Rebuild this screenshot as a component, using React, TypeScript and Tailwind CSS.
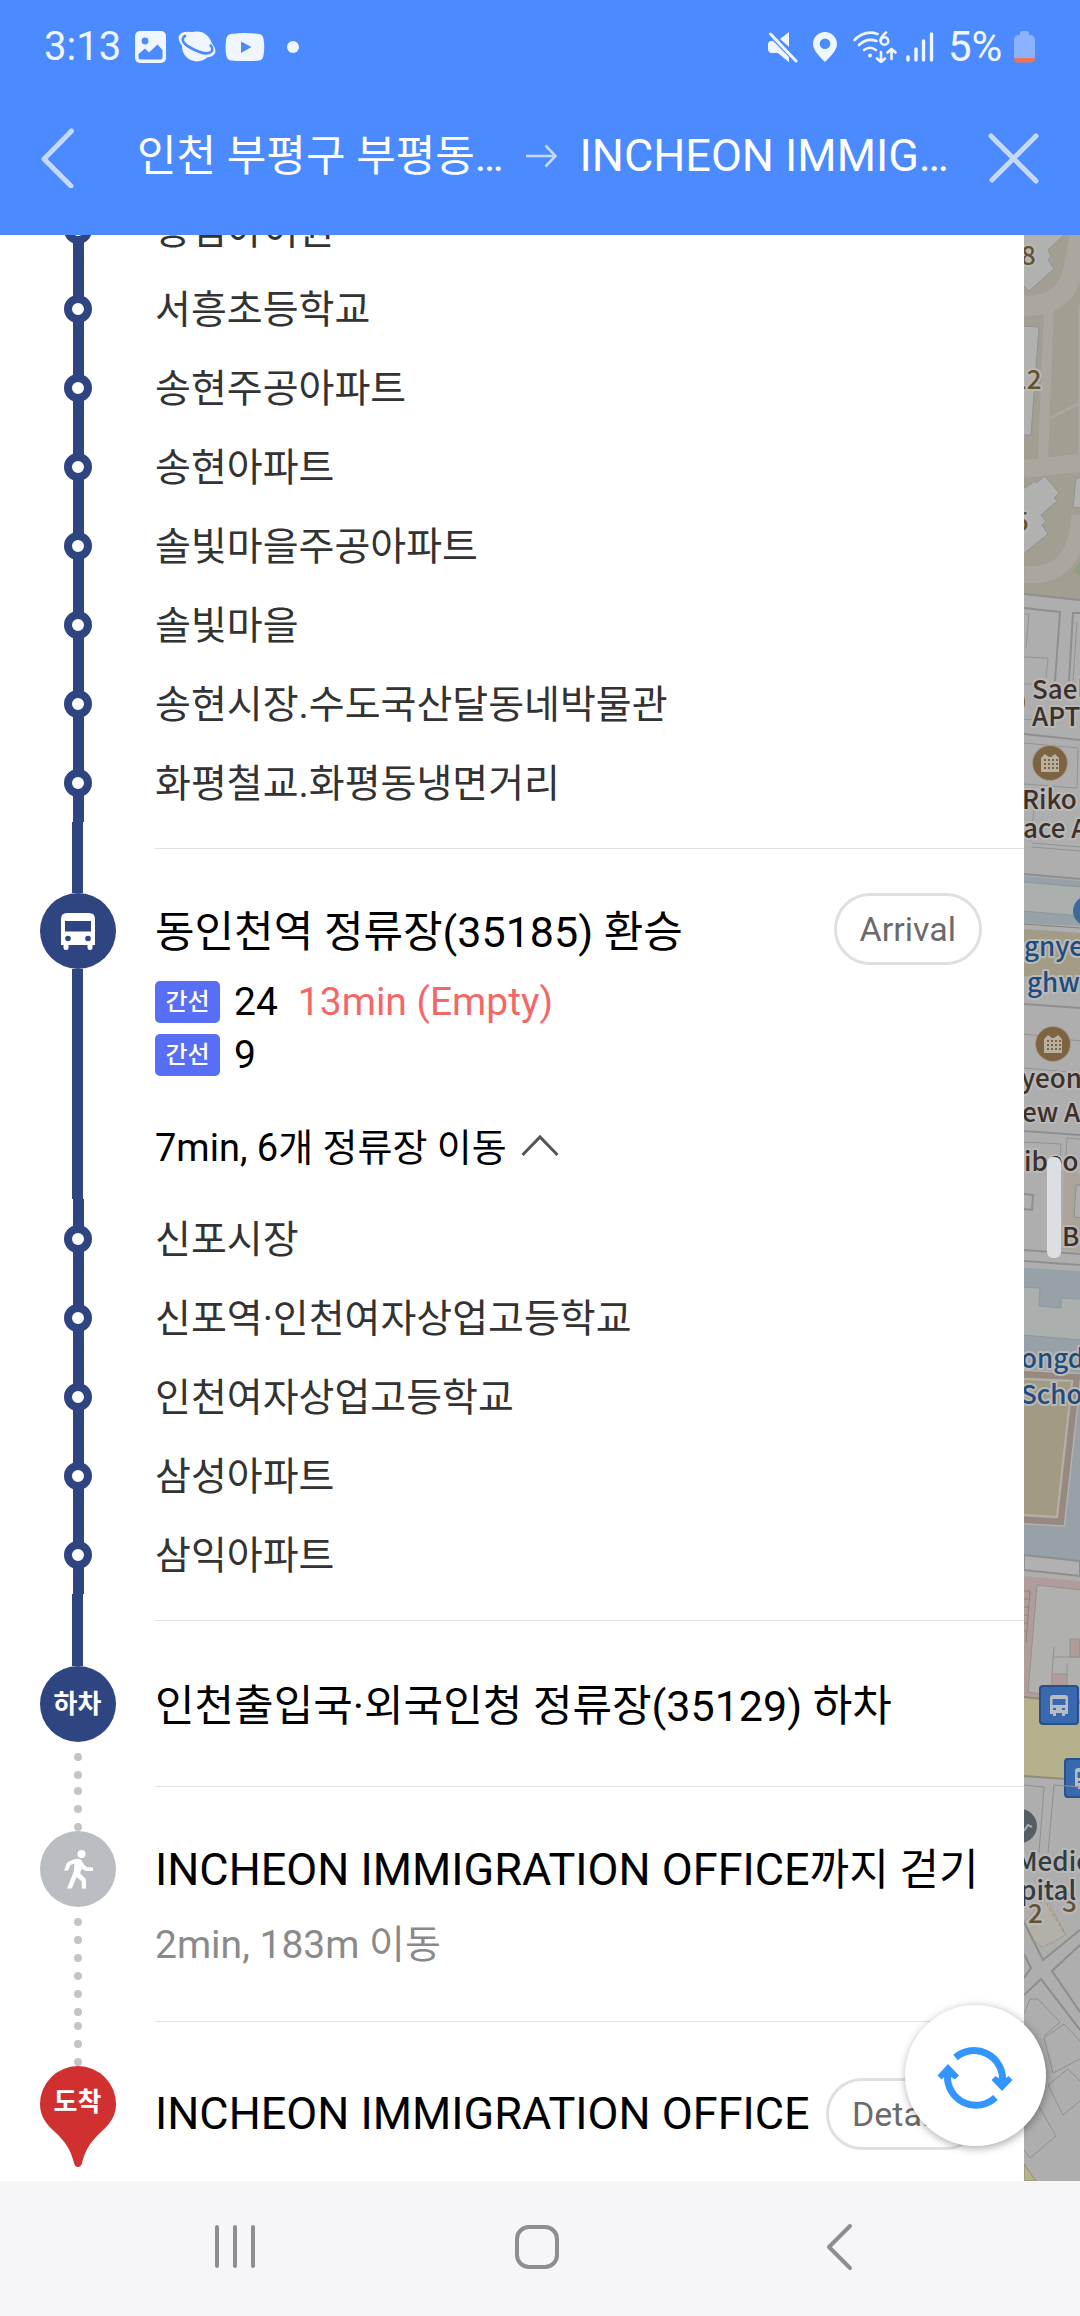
import React from "react";

const FONT = "font-['Roboto','Noto_Sans_CJK_KR',sans-serif]";

const FIRST_STOPS = [
  "송림아이원",
  "서흥초등학교",
  "송현주공아파트",
  "송현아파트",
  "솔빛마을주공아파트",
  "솔빛마을",
  "송현시장.수도국산달동네박물관",
  "화평철교.화평동냉면거리",
];

const SECOND_STOPS = [
  "신포시장",
  "신포역·인천여자상업고등학교",
  "인천여자상업고등학교",
  "삼성아파트",
  "삼익아파트",
];

/* ---------- status bar ---------- */

function StatusBar() {
  return (
    <div className="flex h-[94px] items-center justify-between pl-11 pr-11 text-[#f0f6ff]">
      <div className="flex items-center">
        <span className="w-[91px] text-[40px] leading-[44px]">3:13</span>
        <svg className="h-8 w-8" viewBox="0 0 32 32" aria-hidden="true">
          <rect x="0" y="0" width="31" height="32" rx="5" fill="#f0f6ff" />
          <circle cx="10" cy="10" r="3.4" fill="#4c8aff" />
          <path d="M3.5 23 L10 17.5 L14 21.5 L22.5 13.5 L27.5 19 V26.5 Q27.5 28.5 25.5 28.5 H5.5 Q3.5 28.5 3.5 26.5 Z" fill="#4c8aff" />
        </svg>
        <svg className="ml-[11px] h-8 w-10" viewBox="0 0 40 32" aria-hidden="true">
          <circle cx="19" cy="15.500" r="15" fill="#f0f6ff" />
          <ellipse cx="19" cy="13.500" rx="20" ry="10" transform="rotate(27 19 13.500)" fill="#f0f6ff" />
          <path d="M8 4.500 C2.500 7 4 12 12 16.500 C20 21 29 24 33 21 C35.500 19 34 16 32 13.500" fill="none" stroke="#4c8aff" strokeWidth="2.600" />
        </svg>
        <svg className="ml-[7px] h-7 w-10" viewBox="0 0 40 28" aria-hidden="true">
          <path d="M6 1 Q20 -1 34 1 Q38 1.500 38.500 6 Q40 14 38.500 22 Q38 27 34 27.500 Q20 29 6 27.500 Q2 27 1.200 22 Q0 14 1.200 6 Q2 1.500 6 1Z" fill="#f0f6ff" />
          <path d="M16 8.500 L26.500 14 L16 20Z" fill="#4c8aff" />
        </svg>
        <span className="ml-[22px] size-3 rounded-full bg-[#f0f6ff]" />
      </div>
      <div className="flex items-center">
        <svg className="h-8 w-8" viewBox="0 0 32 32" aria-hidden="true">
          <path d="M2 11 Q3 10 6 10 L22 26 V31 L11 22 H5 Q1 22 1 16 Q1 12 2 11Z" fill="#f0f6ff" />
          <path d="M13 8 L22 1 V16Z" fill="#f0f6ff" />
          <path d="M3.500 3 L29 30" stroke="#4c8aff" strokeWidth="6" />
          <path d="M3.500 3 L29 30" stroke="#f0f6ff" strokeWidth="3" strokeLinecap="round" />
          <path d="M2 11 Q3 10 6 10 L22 26 V31 L11 22 H5 Q1 22 1 16 Q1 12 2 11Z" fill="#f0f6ff" />
        </svg>
        <svg className="ml-3.5 h-8 w-6" viewBox="0 0 24 32" aria-hidden="true">
          <path fillRule="evenodd" d="M12 1 C18.600 1 24 6 24 13 C24 19.500 17 26 12 31 C7 26 0 19.500 0 13 C0 6 5.400 1 12 1Z M12 7.500 A5.300 5.300 0 1 0 12 18.100 A5.300 5.300 0 1 0 12 7.500Z" fill="#f0f6ff" />
        </svg>
        <svg className="ml-4 h-8 w-11" viewBox="0 0 44 32" aria-hidden="true" fill="none" stroke="#f0f6ff" strokeWidth="2.600" strokeLinecap="round" strokeLinejoin="round">
          <path d="M1.500 9 Q12 -1.500 24.500 3" />
          <path d="M6 14 Q14 6.500 23.500 10" />
          <path d="M11 19 Q17 14.500 23 19" />
          <circle cx="17" cy="24.500" r="1.200" fill="#f0f6ff" strokeWidth="1.500" />
          <path d="M33 1.500 Q28.500 5 27.500 9" />
          <circle cx="31.500" cy="10" r="3.800" />
          <path d="M28 21 V31 M24 27.500 L28 31 L32 27.500" />
          <path d="M38.500 28 V18 M34.500 21.500 L38.500 18 L42.500 21.500" />
        </svg>
        <svg className="ml-[9px] h-8 w-7" viewBox="0 0 28 32" aria-hidden="true" fill="none" stroke="#f0f6ff" strokeWidth="3.400" strokeLinecap="round">
          <path d="M2 26 V29 M10 18 V29 M17.500 10 V29 M25.500 3 V29" />
        </svg>
        <span className="ml-3.5 w-[66px] text-[42px] leading-[44px]">5%</span>
        <svg className="h-8 w-[22px]" viewBox="0 0 22 32" aria-hidden="true">
          <path d="M6 2 Q6 0 8 0 H13 Q15 0 15 2 V4 H17 Q21 5 21 9 V28 H0 V9 Q0 5 4 4 H6Z" fill="#8bb2ff" />
          <path d="M0 27 H21 Q21 31.500 17 31.500 H4 Q0 31.500 0 27Z" fill="#ee7459" />
        </svg>
      </div>
    </div>
  );
}

function RouteHeader() {
  return (
    <div className="flex h-[141px] items-start pl-10 pr-10 pt-[34px] leading-[56px] text-white">
      <button type="button" aria-label="Back" className="h-[60px] w-[97px] shrink-0">
        <svg className="h-[60px] w-9" viewBox="0 0 36 60" fill="none" stroke="#c5d9ff" strokeWidth="5" strokeLinecap="round" strokeLinejoin="round">
          <path d="M31.500 3 L4 31 L31 58" />
        </svg>
      </button>
      <span className="whitespace-nowrap text-[43px]">인천 부평구 부평동…</span>
      <svg className="ml-[22px] mt-3 h-8 w-8 shrink-0" viewBox="0 0 32 32" fill="none" stroke="#c5d9ff" strokeWidth="2.600" aria-hidden="true">
        <path d="M0 16 H29 M19.500 5.500 L29.500 16 L19.500 26.500" />
      </svg>
      <span className="ml-[22px] whitespace-nowrap text-[45px]">INCHEON IMMIG…</span>
      <button type="button" aria-label="Close" className="ml-auto mt-1 size-[54px] shrink-0">
        <svg className="size-[54px]" viewBox="0 0 54 54" fill="none" stroke="#c5d9ff" strokeWidth="5" strokeLinecap="round">
          <path d="M5 4 L50 49 M50 4 L6 48" />
        </svg>
      </button>
    </div>
  );
}

/* ---------- timeline ---------- */

function Stop({ name }: { name: string }) {
  return (
    <li className="flex h-[79px]">
      <div className="flex w-[155px] shrink-0 flex-col items-center pl-px">
        <span className="w-[11px] flex-1 bg-[#2f4582]" />
        <span className="z-10 -my-1 size-7 rounded-full border-8 border-[#2f4582] bg-white" />
        <span className="w-[11px] flex-1 bg-[#2f4582]" />
      </div>
      <span className="whitespace-nowrap text-[39px] leading-[82px] text-[#333333]">{name}</span>
    </li>
  );
}

function Dots({ count, first }: { count: number; first?: boolean }) {
  return (
    <span className={first ? "flex flex-col gap-2.5 pt-px" : "flex flex-col gap-2.5 pt-[11px]"}>
      {Array.from({ length: count }, (_, i) => (
        <span key={i} className="size-2 rounded-full bg-[#c4c4c6]" />
      ))}
    </span>
  );
}

function Rail({ children }: { children: React.ReactNode }) {
  return <div className="flex w-[155px] shrink-0 flex-col items-center">{children}</div>;
}

function Bus({ wheel }: { wheel: string }) {
  return (
    <>
      <path d="M0 6 Q0 0 6 0 H28 Q34 0 34 6 V32 H31.500 V34.500 Q31.500 37 29 37 Q26.500 37 26.500 34.500 V32 H7.500 V34.500 Q7.500 37 5 37 Q2.500 37 2.500 34.500 V32 H0Z" fill="#fff" />
      <rect x="4" y="8" width="26" height="10.500" fill={wheel} />
      <circle cx="7" cy="25.500" r="2.800" fill={wheel} />
      <circle cx="27" cy="25.500" r="2.800" fill={wheel} />
    </>
  );
}

function Route({ number, children }: { number: string; children?: React.ReactNode }) {
  return (
    <li className="flex h-[42px] items-center text-[39px] leading-[42px]">
      <span className="mr-3.5 flex h-[42px] w-[65px] items-center justify-center rounded-[5px] bg-[#586ef5] text-2xl font-medium text-white">간선</span>
      <span>{number}</span>
      {children}
    </li>
  );
}

function Pill({ label }: { label: string }) {
  return (
    <button type="button" className="h-[72px] shrink-0 rounded-full border-[3px] border-[#e0e0e0] bg-white px-[23px] text-[34px] leading-[66px] text-[#6b6b6b]">
      {label}
    </button>
  );
}

function Timeline() {
  return (
    <ol className="-mt-[45px] text-[43px] text-black">
      {FIRST_STOPS.map((s) => (
        <Stop key={s} name={s} />
      ))}

      <li className="flex h-[377px]">
        <Rail>
          <span className="h-[71px] w-[11px] bg-[#2f4582]" />
          <span className="flex size-[76px] items-center justify-center rounded-full bg-[#2f4582]">
            <svg className="h-[37px] w-[34px]" viewBox="0 0 34 37" aria-label="Bus">
              <Bus wheel="#2f4582" />
            </svg>
          </span>
          <span className="w-[11px] flex-1 bg-[#2f4582]" />
        </Rail>
        <div className="mt-[26px] flex-1 border-t border-[#e2e2e2] pt-11">
          <div className="flex items-start justify-between pr-[42px]">
            <h2 className="whitespace-nowrap leading-[78px]">동인천역 정류장(35185) 환승</h2>
            <Pill label="Arrival" />
          </div>
          <ul className="mt-2.5 flex flex-col gap-[11px]">
            <Route number="24">
              <span className="ml-5 text-[#f46767]">13min (Empty)</span>
            </Route>
            <Route number="9" />
          </ul>
          <button type="button" className="mt-[46px] flex items-center text-[38px] leading-[52px]">
            7min, 6개 정류장 이동
            <svg className="mb-1 ml-3.5 h-6 w-[38px]" viewBox="0 0 38 24" fill="none" stroke="#555" strokeWidth="3" aria-hidden="true">
              <path d="M1.500 21 L19 3 L36.500 21" />
            </svg>
          </button>
        </div>
      </li>

      {SECOND_STOPS.map((s) => (
        <Stop key={s} name={s} />
      ))}

      <li className="flex h-[192px]">
        <Rail>
          <span className="h-[72px] w-[11px] bg-[#2f4582]" />
          <span className="flex size-[76px] items-center justify-center rounded-full bg-[#2f4582] text-[26px] font-bold leading-8 text-white">하차</span>
          <Dots count={2} />
        </Rail>
        <div className="mt-[26px] flex-1 border-t border-[#e2e2e2] pt-[46px]">
          <h2 className="whitespace-nowrap leading-[78px]">인천출입국·외국인청 정류장(35129) 하차</h2>
        </div>
      </li>

      <li className="flex h-[235px]">
        <Rail>
          <Dots count={3} first />
          <span className="flex size-[76px] items-center justify-center rounded-full bg-[#babec3]">
            <svg className="h-10 w-8" viewBox="0 0 32 40" fill="#fff" aria-label="Walk">
              <circle cx="19.500" cy="5" r="4" />
              <path d="M12 10.500 Q14 9.500 17 10 Q19.500 10.200 20.500 13 Q22 17 25 18.200 L31 18.500 V22 H25 Q22 21.500 19.500 19.500 L18.200 24.500 L23 29 Q24 30 24 31.500 V39.500 H19.800 V32.500 L14.500 28 L10.500 38 Q10 39.500 8.500 39.500 H5 L11.800 22.500 L12.500 14.500 L8.500 16 L6 21.500 H2 L4.800 14.500 Q5.300 13.200 6.500 12.700Z" />
            </svg>
          </span>
          <Dots count={6} />
        </Rail>
        <div className="flex-1 border-t border-[#e2e2e2] pt-11">
          <h2 className="whitespace-nowrap leading-[78px]">
            <span className="text-[45px]">INCHEON IMMIGRATION OFFICE</span>까지 걷기
          </h2>
          <p className="mt-2.5 text-[39px] leading-[52px] text-[#8a8a8a]">2min, 183m 이동</p>
        </div>
      </li>

      <li className="flex h-40">
        <Rail>
          <Dots count={3} first />
          <span className="relative h-[102px] w-[76px] pt-5 text-center text-[26px] font-bold leading-8 text-white">
            <svg className="absolute inset-0 h-[102px] w-[76px]" viewBox="0 0 76 102" aria-hidden="true">
              <path d="M38 0 A38 38 0 0 1 76 38 C76 50 70 58 61 66 C50 76 45 85 42 97 Q41 101 38 101 Q35 101 34 97 C31 85 26 76 15 66 C6 58 0 50 0 38 A38 38 0 0 1 38 0Z" fill="#d03030" />
            </svg>
            <span className="relative">도착</span>
          </span>
        </Rail>
        <div className="flex flex-1 items-start justify-between border-t border-[#e2e2e2] pr-[42px] pt-14">
          <h2 className="whitespace-nowrap text-[45px] leading-[72px]">INCHEON IMMIGRATION OFFICE</h2>
          <Pill label="Details" />
        </div>
      </li>
    </ol>
  );
}

/* ---------- map ---------- */

function AptPin({ x, y }: { x: number; y: number }) {
  return (
    <g transform={`translate(${x} ${y})`}>
      <circle r="17.500" fill="#7c6341" stroke="#a89a85" />
      <path d="M-9 9 V-5 L-5 -9 L-1 -6 L1 -6 L5 -9 L9 -5 V9Z" fill="#b9b0a0" />
      <path d="M-6 -3 H8 M-6 1 H8 M-6 5 H8" stroke="#7c6341" strokeWidth="2" strokeDasharray="2 2" />
    </g>
  );
}

function BusPin({ x, y }: { x: number; y: number }) {
  return (
    <g transform={`translate(${x} ${y})`}>
      <rect x="1" y="1" width="38" height="38" rx="3" fill="#3869ae" stroke="#28508a" strokeWidth="2" />
      <path d="M11 13 Q11 10 14 10 H26 Q29 10 29 13 V29 H26 V31 H23 V28 H17 V31 H14 V29 H11Z" fill="#b7bcc4" />
      <path d="M13.500 14 H26.500 V20 H13.500Z M14 23 H17 V25 H14Z M23 23 H26 V25 H23Z" fill="#3869ae" />
    </g>
  );
}

function MapStrip() {
  return (
    <svg className="h-full w-full" viewBox="0 0 56 1946" preserveAspectRatio="xMinYMin slice" role="img" aria-label="Map">
      <rect width="56" height="1946" fill="#aeaeae" />
      <rect width="56" height="366" fill="#a39e92" />
      <g fill="none" stroke="#aba79e">
        <path d="M0 71 Q38 72 48 40 L56 0" strokeWidth="20" />
        <path d="M25 70 L19 225" strokeWidth="10" />
        <path d="M0 234 L56 228" strokeWidth="18" />
        <path d="M26 183 L56 168" strokeWidth="3" />
        <path d="M56 70 V232" strokeWidth="4" />
        <path d="M0 339 Q52 345 56 280" strokeWidth="17" />
      </g>
      <path d="M0 359 L56 365 V640 H0Z" fill="#aeaeae" />
      <path d="M49 335 L56 328 V341Z" fill="#8ba184" />
      <g fill="#b1b1b0" stroke="#909396">
        <path d="M-1 -1 H41 L24 15 L27 21 L24 25 L30 34 L5 56 L-1 50Z" />
        <path d="M-1 91 L15 92 L7 200 H-1Z" />
        <path d="M-1 254 L11 246 L12 248 L21 241 L35 258 L30 263 L33 266 L17 280 L22 286 L18 290 L24 299 L-1 319Z" />
        <path d="M52 243 H57 V273 L49 272Z" />
      </g>
      <g fill="none" stroke="#8f8f8f" strokeWidth="2">
        <path d="M0 359 L56 365 M0 373 L36 377 L31 446 M56 378 H49 L45 446 M0 499 L56 505 M0 639 L56 644 M0 769 L56 773 M0 896 L56 900 M0 1015 L56 1019 M0 1026 L56 1030" />
      </g>
      <g fill="none" stroke="#939393">
        <path d="M0 379 H5 L2 413 M0 422 L24 423 L22 442 M53 387 L49 446 M0 449 H14 M0 484 L10 485 M0 508 L54 513 L53 553 L0 549 M8 608 L56 612 M10 574 L6 606 M0 799 L56 806 M0 833 L56 838 M0 907 L37 909 L36 925 M42 921 L43 903 L56 904 M8 612 L56 616" />
      </g>

      <path d="M0 641 L56 646 V691 L0 688Z" fill="#96a1a8" />
      <path d="M-1 647 L57 652 V681 L-1 676Z" fill="#abafae" stroke="#90979b" />
      <path d="M0 689 L56 693" stroke="#8d8078" />
      <path d="M0 694 L56 698 V746 L0 741Z" fill="#a29c87" />
      <circle cx="64" cy="676" r="15" fill="#3b6a9b" />

      <path d="M40 925 L56 940 V1017 L38 1014Z" fill="#aba49a" />
      <path d="M-1 959 L9 960 L8 975 L-1 974Z" fill="#aeaeae" stroke="#8f8f8f" strokeWidth="2" />
      <path d="M52 950 H57 V983 L50 982Z" fill="#aeaeae" stroke="#8f8f8f" />

      <path d="M0 1033 L56 1036 V1326 L0 1320Z" fill="#96a1a8" />
      <path d="M-1 1052 L16 1053 L15 1071 L37 1073 V1063 L57 1064 V1105 L-1 1100Z" fill="#abafae" stroke="#90979b" />
      <path d="M-2 1139 L53 1142 L37 1287 L-2 1285Z" fill="#a29b84" stroke="#b5b0aa" strokeWidth="9" />
      <path d="M-2 1139 L53 1142 L37 1287 L-2 1285Z" fill="#a29b84" stroke="#958980" strokeWidth="6" />
      <path d="M-2 1144 L48 1146 L33 1282 L-2 1280Z" fill="#a29b84" stroke="#b5b0aa" strokeWidth="2" />

      <path d="M0 1320 L56 1326 V1341 L0 1335Z" fill="#b1b1b1" stroke="#8f8f8f" strokeWidth="2" />
      <path d="M0 1341 L56 1346 V1468 L0 1462Z" fill="#b09d9b" />
      <path d="M13 1350 L57 1355 V1466 L4 1457Z" fill="#b0b0ae" stroke="#969090" />
      <path d="M46 1404 H56 V1422 H46Z M28 1439 H43 V1452 H28Z" fill="#b09d9b" stroke="#969090" />
      <path d="M30 1412 L28 1439 M29 1422 H56 M43 1428 V1440" fill="none" stroke="#969090" />
      <path d="M0 1356 H6 L2 1408 M0 1364 H6 M0 1372 H5 M0 1380 H4 M0 1388 H4 M0 1396 H3" fill="none" stroke="#8d8181" />
      <path d="M0 1462 L56 1468 V1545 L0 1541Z" fill="#b4b18c" />
      <path d="M0 1462 L56 1468 M0 1541 L56 1545" stroke="#8f8c78" strokeWidth="2" />
      <BusPin x={15} y={1450} />
      <BusPin x={40} y={1523} />

      <g fill="none" stroke="#8f8f8f">
        <path d="M0 1550 L20 1552 L15 1618 M56 1552 L30 1550 L24 1618" />
        <path d="M0 1779 L6 1764 H14 L36 1787 L20 1801 M20 1803 L40 1789 L56 1806 M20 1803 L29 1838 L56 1824 M24 1850 L44 1834 L56 1846 M13 1868 L32 1901 L6 1923 L0 1915 M24 1850 L39 1880 L56 1866" />
      </g>
      <path d="M0 1687 L22 1662 L42 1700 L31 1706 L18 1712 L8 1705Z" fill="#b3b0aa" stroke="#a39a88" strokeDasharray="5 1" />
      <path d="M22 1668 L42 1700" stroke="#948a78" strokeDasharray="4 2" />
      <g fill="none" stroke="#8d8d8d" strokeWidth="2">
        <path d="M0 1687 L19 1725 L56 1695 M0 1719 L7 1733 L0 1743 M56 1710 L28 1736 L56 1777 M0 1760 L17 1744 L56 1795" />
      </g>
      <path d="M0 1929 L12 1946 H0Z" fill="#b4b18c" stroke="#8f8c78" />
      <circle cx="-4" cy="1591" r="17" fill="#555e63" />
      <path d="M0 1596 L4 1590 L8 1592" fill="none" stroke="#a9adaf" strokeWidth="2" />

      <AptPin x={26} y={528} />
      <AptPin x={29} y={809} />
      <circle cx="-16" cy="467" r="17" fill="#7c6341" />

      <g
        className="font-['Noto_Sans_CJK_KR','Noto_Sans',sans-serif] text-[26px] font-medium"
        stroke="#b9b9b9"
        strokeWidth="4"
        strokeLinejoin="round"
        paintOrder="stroke"
      >
        <g fill="#65532f">
          <text x="-3" y="30">8</text>
          <text x="-12" y="154">12</text>
          <text x="-10" y="296">5</text>
          <text x="4" y="1688">2</text>
          <text x="38" y="1677">3</text>
        </g>
        <g fill="#3d3029">
          <text x="8" y="464">Sael</text>
          <text x="8" y="491">APT</text>
          <text x="-2" y="574">Riko</text>
          <text x="-1" y="603">ace A</text>
          <text x="-3" y="853">yeon</text>
          <text x="-2" y="887">ew A</text>
          <text x="0" y="936">ibeo</text>
          <text x="38" y="1011">B</text>
        </g>
        <g fill="#1f4c7c">
          <text x="0" y="721">gnye</text>
          <text x="3" y="757">ghw</text>
          <text x="-3" y="1133">ongd</text>
          <text x="-3" y="1169">Schoo</text>
        </g>
        <g fill="#333a40">
          <text x="-8" y="1636">Medic</text>
          <text x="-4" y="1665">pital</text>
        </g>
      </g>
    </svg>
  );
}

/* ---------- page ---------- */

function RefreshButton() {
  return (
    <button
      type="button"
      aria-label="Refresh"
      className="absolute bottom-[35px] right-[34px] z-20 flex size-[141px] items-center justify-center rounded-full bg-white shadow-[1px_2px_8px_rgba(0,0,0,0.35)]"
    >
      <svg className="size-20" viewBox="-39 -42 80 80">
        <g fill="none" stroke="#3396ff" strokeWidth="7">
          <path d="M-19.500 -20.500 A28.500 28.500 0 0 1 27.500 3" />
          <path d="M20.500 19.500 A28.500 28.500 0 0 1 -27.500 -3" />
        </g>
        <g fill="#3396ff">
          <path d="M27 13 L16.500 2 L20.500 -2 L25 1 H30 L33.500 -2 L37.500 2Z" />
          <path d="M-27 -14 L-16 -2.500 L-20 1.500 L-25 -1.500 H-30 L-33.500 1.500 L-37.500 -2.500Z" />
        </g>
      </svg>
    </button>
  );
}

function NavBar() {
  return (
    <nav className="grid h-[135px] grid-cols-3 items-center bg-[#f6f6f8] pb-1 pl-[84px] pr-[90px] text-[#8e8e90]">
      <button type="button" aria-label="Recent apps" className="flex justify-center">
        <svg className="h-12 w-11" viewBox="0 0 44 48" fill="none" stroke="currentColor" strokeWidth="4" strokeLinecap="round">
          <path d="M4 4 V43 M22 4 V43 M40 4 V43" />
        </svg>
      </button>
      <button type="button" aria-label="Home" className="flex justify-center">
        <svg className="size-12" viewBox="0 0 48 48" fill="none" stroke="currentColor" strokeWidth="4">
          <rect x="4" y="4" width="40" height="40" rx="12" />
        </svg>
      </button>
      <button type="button" aria-label="Back" className="flex justify-center">
        <svg className="h-12 w-7" viewBox="0 0 28 48" fill="none" stroke="currentColor" strokeWidth="4" strokeLinecap="round" strokeLinejoin="round">
          <path d="M25 3 L4 24 L25 45" />
        </svg>
      </button>
    </nav>
  );
}

export default function App() {
  return (
    <div className={`flex min-h-screen flex-col bg-white ${FONT}`}>
      <header className="bg-[#4c8aff]">
        <StatusBar />
        <RouteHeader />
      </header>
      <main className="relative flex flex-1 overflow-hidden">
        <section className="min-w-0 flex-1 overflow-hidden bg-white">
          <Timeline />
        </section>
        <aside className="relative w-14 shrink-0 overflow-hidden bg-[#aeaeae]">
          <div className="absolute inset-0">
            <MapStrip />
          </div>
          <span className="absolute left-[23px] top-[922px] h-[101px] w-3.5 rounded-md bg-[#dcdee1]" />
        </aside>
        <RefreshButton />
      </main>
      <NavBar />
    </div>
  );
}
